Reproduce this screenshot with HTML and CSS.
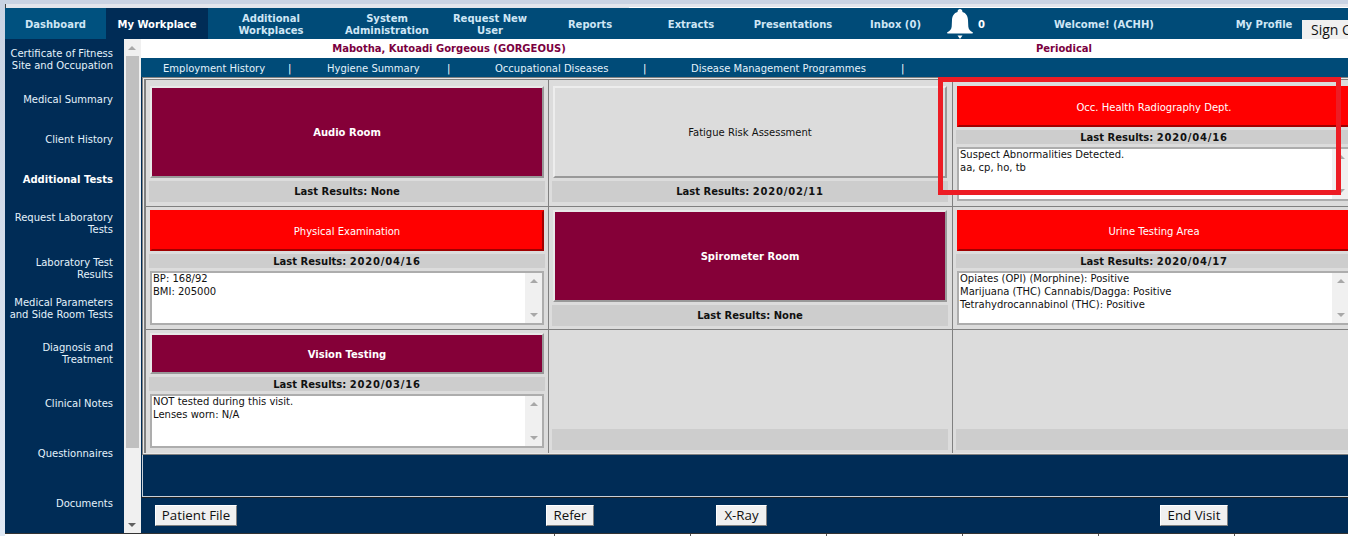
FILE: index.html
```html
<!DOCTYPE html>
<html lang="en">
<head>
<meta charset="utf-8">
<title>My Workplace</title>
<link rel="stylesheet" href="styles.css">
</head>
<body>
<div class="top-strip"></div>
<div class="app">
  <nav class="nav">
    <a class="nav-item nav-dash">Dashboard</a>
    <a class="nav-item nav-active">My Workplace</a>
    <a class="nav-item">Additional<br>Workplaces</a>
    <a class="nav-item">System<br>Administration</a>
    <a class="nav-item">Request New<br>User</a>
    <a class="nav-item">Reports</a>
    <a class="nav-item">Extracts</a>
    <a class="nav-item">Presentations</a>
    <a class="nav-item">Inbox (0)</a>
    <a class="nav-bell">
      <svg class="bell" viewBox="0 0 26 30" width="26" height="30" aria-hidden="true">
        <path fill="#fff" d="M13 0c1.4 0 2.4 1 2.4 2.3v.6c3.7 1 5.4 4 5.6 8l.3 6.500c.2 2.800 2 4.300 4.300 5.800.600.400.400 1.300-.400 1.300H.800c-.800 0-1-.900-.400-1.300 2.300-1.500 4.100-3 4.300-5.800L5 10.900c.2-4 1.900-7 5.600-8v-.6C10.600 1 11.600 0 13 0z"/>
        <path fill="#fff" d="M10.500 26.500h5L13 30z"/>
      </svg>
      <span>0</span>
    </a>
    <a class="nav-item">Welcome! (ACHH)</a>
    <a class="nav-item">My Profile</a>
    <button class="sign-out" type="button">Sign Out</button>
  </nav>
  <div class="body">
    <aside class="side">
      <a class="side-item">Certificate of Fitness<br>Site and Occupation</a>
      <a class="side-item">Medical Summary</a>
      <a class="side-item">Client History</a>
      <a class="side-item side-current">Additional Tests</a>
      <a class="side-item">Request Laboratory<br>Tests</a>
      <a class="side-item">Laboratory Test<br>Results</a>
      <a class="side-item">Medical Parameters<br>and Side Room Tests</a>
      <a class="side-item">Diagnosis and<br>Treatment</a>
      <a class="side-item">Clinical Notes</a>
      <a class="side-item">Questionnaires</a>
      <a class="side-item">Documents</a>
    </aside>
    <div class="vscroll">
      <span class="arrow arrow-up"></span>
      <span class="vthumb"></span>
      <span class="arrow arrow-down"></span>
    </div>
    <main class="main">
      <header class="patient">
        <span class="patient-name">Mabotha, Kutoadi Gorgeous (GORGEOUS)</span>
        <span class="patient-type">Periodical</span>
      </header>
      <div class="subnav">
        <a>Employment History</a><i>|</i>
        <a>Hygiene Summary</a><i>|</i>
        <a>Occupational Diseases</a><i>|</i>
        <a>Disease Management Programmes</a><i>|</i>
      </div>
      <div class="board">
        <div class="grid">
          <section class="cell">
            <button class="room tall maroon" type="button">Audio Room</button>
            <div class="last tall-bar">Last Results: None</div>
          </section>
          <section class="cell">
            <button class="room tall neutral" type="button">Fatigue Risk Assessment</button>
            <div class="last tall-bar">Last Results: <span class="date">2020/02/11</span></div>
          </section>
          <section class="cell">
            <button class="room short red" type="button">Occ. Health Radiography Dept.</button>
            <div class="last">Last Results: <span class="date">2020/04/16</span></div>
            <div class="results">
              <p>Suspect Abnormalities Detected.<br>aa, cp, ho, tb</p>
              <div class="mini"><span class="arrow arrow-up"></span><span class="arrow arrow-down"></span></div>
            </div>
          </section>
          <section class="cell">
            <button class="room short red" type="button">Physical Examination</button>
            <div class="last">Last Results: <span class="date">2020/04/16</span></div>
            <div class="results">
              <p>BP: 168/92<br>BMI: 205000</p>
              <div class="mini"><span class="arrow arrow-up"></span><span class="arrow arrow-down"></span></div>
            </div>
          </section>
          <section class="cell">
            <button class="room tall maroon" type="button">Spirometer Room</button>
            <div class="last tall-bar">Last Results: None</div>
          </section>
          <section class="cell">
            <button class="room short red" type="button">Urine Testing Area</button>
            <div class="last">Last Results: <span class="date">2020/04/17</span></div>
            <div class="results">
              <p>Opiates (OPI) (Morphine): Positive<br>Marijuana (THC) Cannabis/Dagga: Positive<br>Tetrahydrocannabinol (THC): Positive</p>
              <div class="mini"><span class="arrow arrow-up"></span><span class="arrow arrow-down"></span></div>
            </div>
          </section>
          <section class="cell">
            <button class="room short maroon" type="button">Vision Testing</button>
            <div class="last">Last Results: <span class="date">2020/03/16</span></div>
            <div class="results">
              <p>NOT tested during this visit.<br>Lenses worn: N/A</p>
              <div class="mini"><span class="arrow arrow-up"></span><span class="arrow arrow-down"></span></div>
            </div>
          </section>
          <section class="cell cell-empty"><div class="last tall-bar"></div></section>
          <section class="cell cell-empty"><div class="last tall-bar"></div></section>
        </div>
      </div>
      <div class="spacer"></div>
      <div class="actions">
        <button class="btn" type="button">Patient File</button>
        <button class="btn" type="button">Refer</button>
        <button class="btn" type="button">X-Ray</button>
        <button class="btn" type="button">End Visit</button>
      </div>
    </main>
  </div>
  <div class="foot"><span></span><span></span><span></span><span></span><span></span><span></span><span></span></div>
</div>
<div class="callout"></div>
</body>
</html>
```
FILE: styles.css
```css
* { box-sizing: border-box; }
html, body { margin: 0; height: 536px; overflow: hidden; }
body {
  position: relative;
  width: 1348px;
  background: linear-gradient(#c9d3e3, #e0e9f5);
  font-family: "DejaVu Sans", Verdana, sans-serif;
  font-size: 10px;
  line-height: 12px;
}
.top-strip {
  height: 8px;
  background:
    linear-gradient(#c9d3e3 4px, transparent 4px),
    linear-gradient(#fff, #fff) 629px 7px / 100% 1px no-repeat,
    linear-gradient(#444, #444) 5px 4px / 1px 4px no-repeat,
    linear-gradient(#e2e5ec, #e2e5ec) 5px 0 / 100% 100% no-repeat;
}
.app { margin-left: 5px; width: 1400px; }

.nav {
  position: relative;
  display: grid;
  grid-template-columns: 101px 102px 126px 106px 100px 100px 102px 102px 103px 42px 230px 90px;
  height: 31px;
  background: #004b78;
  color: #cfe6f5;
  font-weight: bold;
}
.nav-item { display: flex; align-items: center; justify-content: center; padding-top: 2px; text-align: center; }
.nav-dash { background: #00517f; }
.nav-active { background: #002c56; color: #fff; }
.nav-bell { display: flex; align-items: flex-start; gap: 5px; }
.nav-bell span { margin-top: 11px; color: #fff; }
.bell { display: block; margin-top: 1px; }
.sign-out {
  position: absolute;
  left: 1297px;
  top: 12px;
  width: 100px;
  height: 19px;
  padding: 0 0 0 9px;
  border: 0;
  background: #f0f0f0;
  color: #111;
  text-align: left;
  font: 14px/19px "Open Sans", sans-serif;
}

.body { display: flex; height: 494px; }
.side {
  display: grid;
  grid-template-rows: 42px 38px 42px 38px 50px 40px 40px 50px 50px 50px 50px;
  flex: none;
  width: 119px;
  background: #002c56;
  color: #e4f2fb;
  overflow: hidden;
}
.side-item { display: flex; align-items: center; justify-content: flex-end; padding-right: 11px; text-align: right; }
.side-current { color: #fff; font-weight: bold; }

.vscroll { position: relative; flex: none; width: 17px; background: #f0f0f0; }
.vthumb { position: absolute; left: 2px; top: 17px; width: 13px; height: 392px; background: #c0c0c0; }
.vscroll .arrow { position: absolute; left: 4px; }
.vscroll .arrow-up { top: 7px; }
.vscroll .arrow-down { bottom: 6px; }
.arrow { display: block; width: 0; height: 0; border-left: 4px solid transparent; border-right: 4px solid transparent; }
.arrow-up { border-bottom: 4px solid #a8a8a8; }
.arrow-down { border-top: 4px solid #606060; }

.main { display: flex; flex-direction: column; flex: none; width: 1216px; background: #002c56; }
.patient {
  display: grid;
  grid-template-columns: 616px 1fr;
  height: 19px;
  background: #fff;
  color: #7a0040;
  font-weight: bold;
  line-height: 19px;
  text-align: center;
}
.patient-type { padding-left: 14px; }
.subnav {
  display: grid;
  grid-template-columns: 125px 39px 120px 48px 148px 48px 210px 20px;
  height: 19px;
  padding-left: 22px;
  background: #004b78;
  color: #e4f2fb;
  line-height: 21px;
  white-space: nowrap;
}
.subnav i { font-style: normal; color: #fff; }

.board {
  margin-left: 1px;
  padding: 1px;
  height: 378px;
  border: 1px solid #808080;
  background: #e8e8e8;
}
.grid {
  display: grid;
  grid-template-columns: 403px 404px 403px;
  grid-template-rows: 127px 123px 123px;
  height: 374px;
  border: 1px solid #808080;
  border-width: 1px 0 0 2px;
  background: #dcdcdc;
}
.cell {
  display: flex;
  flex-direction: column;
  padding: 3px 3px 0;
  border-right: 1px solid #808080;
  border-bottom: 1px solid #808080;
}
.cell:nth-child(-n+3) { padding-top: 6px; }
.cell:nth-child(n+7) { border-bottom: 0; }
.cell:nth-child(3n+2) { padding-right: 4px; }
.cell-empty { justify-content: flex-end; padding-bottom: 3px; }

.room {
  display: block;
  flex: none;
  margin: 0 1px 3px;
  padding: 2px 0 0;
  border: 2px solid;
  font: inherit;
  line-height: 12px;
}
.tall { height: 92px; }
.short { height: 41px; }
.maroon { background: #850038; border-color: #e8e8e8 #999 #999 #e8e8e8; color: #fff; font-weight: bold; }
.neutral { background: #dcdcdc; border-color: #ededed #999 #999 #ededed; color: #111; }
.red { background: #f00; border-color: #f00 #a00000 #a00000 #f00; color: #fff; }

.last {
  flex: none;
  height: 14px;
  margin-bottom: 3px;
  background: #cdcdcd;
  color: #111;
  font-weight: bold;
  line-height: 15px;
  text-align: center;
}
.date { letter-spacing: .8px; }
.tall-bar { height: 21px; margin-bottom: 0; line-height: 21px; }

.results {
  display: flex;
  flex: none;
  height: 54px;
  margin: 0 1px;
  border: 2px solid #adadad;
  background: #fff;
  color: #111;
  line-height: 13px;
}
.results p { flex: 1; margin: -1px 0 0; padding: 0 1px; }
.mini {
  display: flex;
  flex-direction: column;
  justify-content: space-between;
  align-items: center;
  flex: none;
  width: 17px;
  padding: 6px 0;
  background: #f0f0f0;
}
.mini .arrow-down { border-top-color: #a8a8a8; }

.spacer { height: 42px; border-left: 1px solid #c8d0d8; border-bottom: 1px solid #c8d0d8; margin-left: 1px; }
.actions {
  display: grid;
  grid-template-columns: 391px 170px 444px auto;
  justify-items: start;
  align-items: start;
  flex: 1;
  padding: 7px 0 0 14px;
  border-top: 1px solid #222;
}
.btn {
  height: 21px;
  padding: 0 0 2px;
  border: 1px solid;
  border-color: #fff #808080 #808080 #fff;
  background: #f0f0f0;
  color: #111;
  font: 13.3px/18px "Open Sans", sans-serif;
}
.btn:nth-child(1) { width: 82px; }
.btn:nth-child(2) { width: 48px; }
.btn:nth-child(3) { width: 51px; }
.btn:nth-child(4) { width: 68px; }

.foot {
  display: flex;
  height: 3px;
  background: #fff;
  border-top: 1px solid #333;
}
.foot span { flex: none; width: 136px; border-left: 1px solid #555; }
.foot span:first-child { width: 549px; border-left: 0; }

.callout {
  position: absolute;
  left: 938px;
  top: 77px;
  width: 403px;
  height: 118px;
  border: 5px solid #ed1c24;
}
```
